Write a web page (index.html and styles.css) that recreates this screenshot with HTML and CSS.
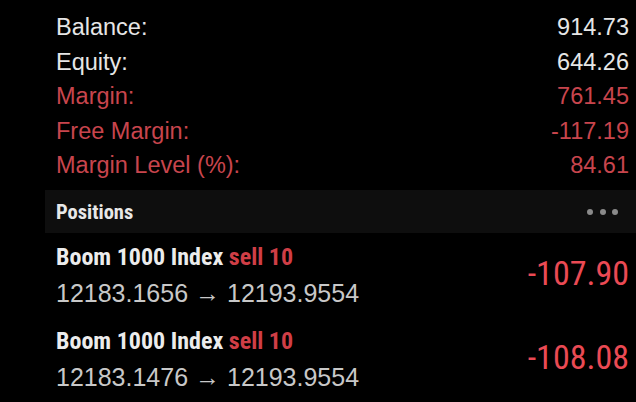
FILE: index.html
```html
<!DOCTYPE html>
<html>
<head>
<meta charset="utf-8">
<link rel="stylesheet" href="styles.css">
</head>
<body>
<div class="summary">
  <div class="row"><span>Balance:</span><span>914.73</span></div>
  <div class="row"><span>Equity:</span><span>644.26</span></div>
  <div class="row red"><span>Margin:</span><span>761.45</span></div>
  <div class="row red"><span>Free Margin:</span><span>-117.19</span></div>
  <div class="row red"><span>Margin Level (%):</span><span>84.61</span></div>
</div>
<div class="band">
  <span class="band-title">Positions</span>
  <span class="dots"><i></i><i></i><i></i></span>
</div>
<div class="pos">
  <div class="pos-info">
    <div class="pos-name">Boom 1000 Index <span class="sell">sell 10</span></div>
    <div class="pos-price">12183.1656 → 12193.9554</div>
  </div>
  <div class="pnl">-107.90</div>
</div>
<div class="pos">
  <div class="pos-info">
    <div class="pos-name">Boom 1000 Index <span class="sell">sell 10</span></div>
    <div class="pos-price">12183.1476 → 12193.9554</div>
  </div>
  <div class="pnl">-108.08</div>
</div>
</body>
</html>
```
FILE: styles.css
```css
html, body {
  margin: 0;
  background: #000;
}
body {
  width: 636px;
  height: 402px;
  overflow: hidden;
  font-family: "Liberation Sans", Arial, sans-serif;
  color: #e6e6e6;
}
.summary {
  padding: 10px 7px 0 56px;
}
.row {
  display: flex;
  justify-content: space-between;
  font-size: 23.5px;
  line-height: 34.5px;
}
.row.red {
  color: #c8454d;
}
.band {
  margin: 7.5px 0 0 45px;
  height: 43px;
  background: #0e0e0e;
  display: flex;
  align-items: center;
  justify-content: space-between;
  padding: 0 18px 0 11px;
}
.band-title {
  font-family: Roboto, sans-serif;
  font-weight: 700;
  font-size: 20.5px;
  font-stretch: 86%;
  color: #e8e8e8;
}
.dots {
  display: flex;
  gap: 6.5px;
}
.dots i {
  width: 6px;
  height: 6px;
  border-radius: 50%;
  background: #8a8a8a;
}
.pos {
  display: flex;
  align-items: center;
  justify-content: space-between;
  padding: 6px 7px 6px 56px;
}
.pos-name {
  font-family: Roboto, sans-serif;
  font-weight: 700;
  font-size: 24px;
  line-height: 36px;
  font-stretch: 80%;
  color: #ececec;
}
.sell {
  color: #d03e46;
}
.pos-price {
  font-size: 25px;
  line-height: 36px;
  color: #c8c8c8;
}
.pnl {
  font-family: Roboto, sans-serif;
  font-weight: 450;
  font-size: 34px;
  line-height: 40px;
  font-stretch: 82%;
  color: #ea4a54;
  margin-bottom: 4px;
}
```
